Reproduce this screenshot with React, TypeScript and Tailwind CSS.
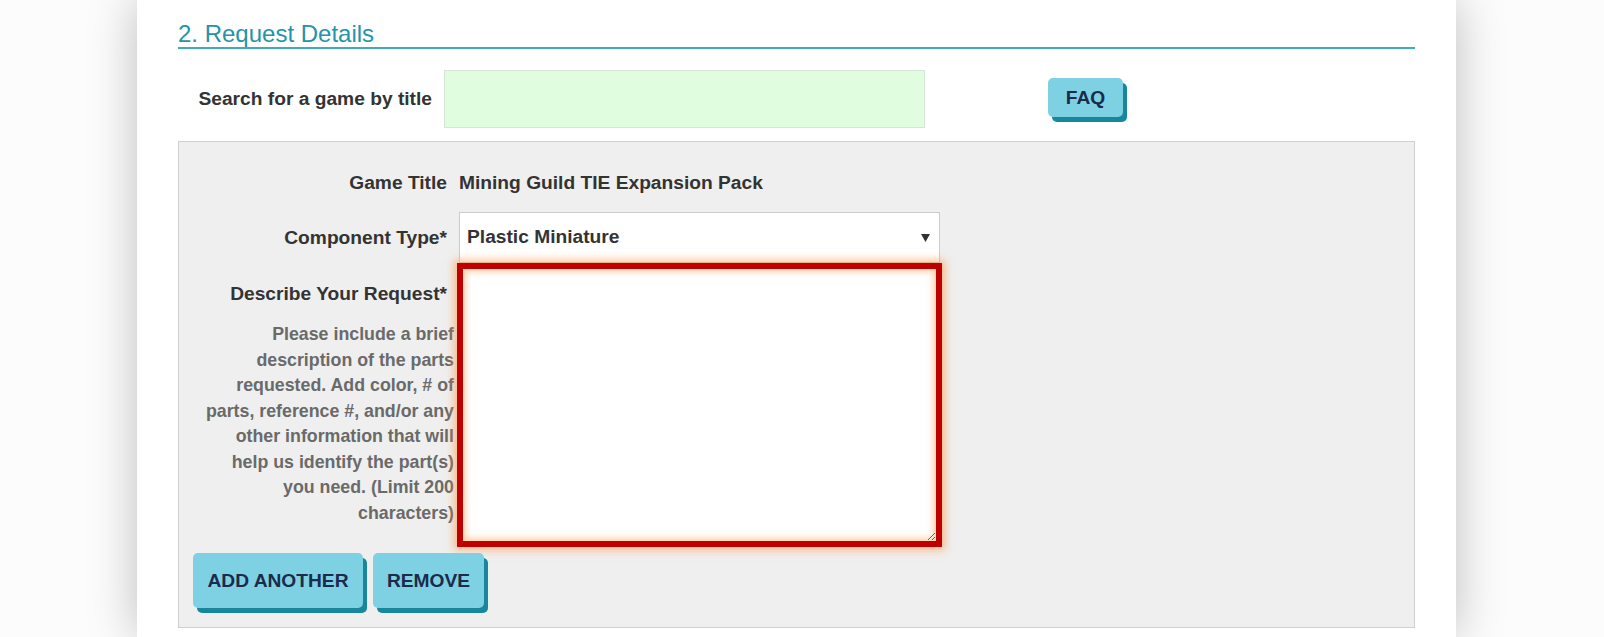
import React from 'react';

const font = "font-['Liberation_Sans',Arial,sans-serif]";

const Btn: React.FC<{ label: string; className?: string }> = ({ label, className = '' }) => (
  <button
    className={`bg-[#7dd1e3] text-[#1b2b4b] font-bold uppercase text-[19.2px] leading-none rounded-[5px] shadow-[4px_5px_0_0_#17889b] ${className}`}
  >
    {label}
  </button>
);

export default function App() {
  return (
    <div className={`min-h-[637px] bg-[#fcfcfc] overflow-hidden ${font}`}>
      <div className="ml-[137px] w-[1319px] min-h-[637px] bg-white px-[41px] pt-[20px] shadow-[0_0_45px_rgba(0,0,0,0.25)]">
        <h2 className="text-[24px] leading-[27px] text-[#2593a9] border-b-2 border-[#3eabc1]">
          2. Request Details
        </h2>

        {/* search row */}
        <div className="mt-[21px] flex">
          <div className="w-[266px] pr-[12px] flex items-center justify-end">
            <span className="text-[19.2px] font-bold text-[#333]">Search for a game by title</span>
          </div>
          <input
            type="text"
            className="w-[481px] h-[58px] bg-[#e0fde0] border border-[#d6e6d6] outline-none"
          />
          <Btn label="FAQ" className="ml-[123px] mt-[8px] w-[75px] h-[39px]" />
        </div>

        {/* component box */}
        <div className="mt-[13px] bg-[#efefef] border border-[#cfcfcf] pt-[29px] pb-[19px]">
          <div className="flex items-center">
            <div className="w-[268px] text-right text-[19.2px] leading-[24px] font-bold text-[#333]">Game Title</div>
            <div className="ml-[12px] text-[19.2px] leading-[24px] font-bold text-[#333]">
              Mining Guild TIE Expansion Pack
            </div>
          </div>

          <div className="mt-[17px] flex items-center">
            <div className="w-[268px] text-right text-[19.2px] leading-[24px] font-bold text-[#333]">Component Type*</div>
            <div className="ml-[12px] w-[481px] h-[51px] bg-white border border-[#cccccc] flex items-center justify-between pl-[7px] pr-[9px]">
              <span className="text-[19.2px] font-bold text-[#333]">Plastic Miniature</span>
              <svg width="9" height="8" viewBox="0 0 9 8">
                <path d="M0 0 H9 L4.5 8 Z" fill="#333" />
              </svg>
            </div>
          </div>

          <div className="flex">
            <div className="w-[275px] flex flex-col items-end">
              <div className="mt-[19px] pr-[7px] text-[19.2px] leading-[24px] font-bold text-[#333]">
                Describe Your Request*
              </div>
              <p className="mt-[16px] w-[252px] text-right text-[17.8px] leading-[25.5px] font-bold text-[#6a6a6a]">
                Please include a brief description of the parts requested. Add color, # of parts, reference #,
                and/or any other information that will help us identify the part(s) you need. (Limit 200
                characters)
              </p>
            </div>
            <textarea
              className="ml-[3px] w-[485px] h-[284px] bg-white border-[6px] border-[#c00000] outline-none resize shadow-[0_0_8px_3px_rgba(255,150,70,0.6),inset_0_0_6px_3px_rgba(255,170,100,0.55)]"
            />
          </div>

          <div className="mt-[6px] ml-[14px] flex gap-[10px]">
            <Btn label="Add Another" className="w-[170px] h-[55px]" />
            <Btn label="Remove" className="w-[111px] h-[55px]" />
          </div>
        </div>
      </div>
    </div>
  );
}
